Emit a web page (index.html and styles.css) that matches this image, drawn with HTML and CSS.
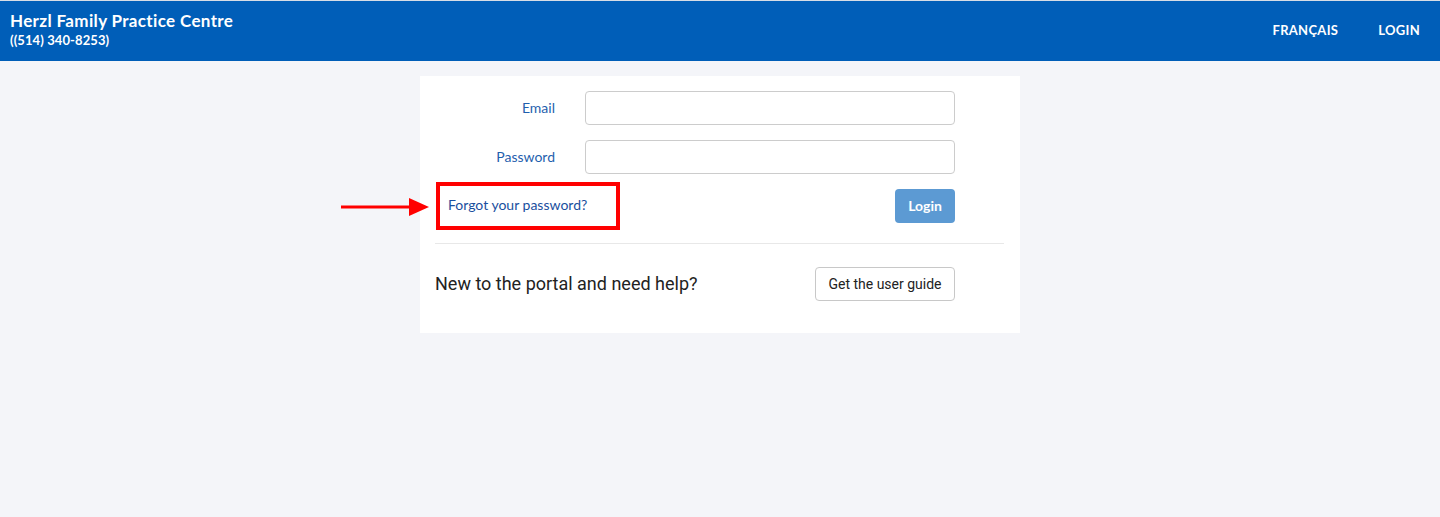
FILE: index.html
```html
<!DOCTYPE html>
<html lang="en">
<head>
	<meta charset="UTF-8">
	<title>Herzl Family Practice Centre</title>
	<link rel="stylesheet" href="styles.css">
</head>
<body>
	<header class="topbar">
		<div class="brand">
			<div class="brand-name">Herzl Family Practice Centre</div>
			<div class="brand-phone">((514) 340-8253)</div>
		</div>
		<nav class="topnav">
			<a href="javascript:;">FRANÇAIS</a>
			<a href="javascript:;">LOGIN</a>
		</nav>
	</header>

	<section class="card">
		<form class="login-form">
			<div class="form-row">
				<label class="form-label" for="email">Email</label>
				<input class="form-input" id="email" type="text">
			</div>
			<div class="form-row">
				<label class="form-label" for="password">Password</label>
				<input class="form-input" id="password" type="password">
			</div>
			<div class="form-actions">
				<div class="forgot">
					<!-- annotation arrow -->
					<svg class="forgot-arrow" width="88" height="20" viewBox="0 0 88 20">
						<rect x="0" y="8.5" width="70" height="3" fill="#f00"/>
						<polygon points="68,1 88,10 68,19" fill="#f00"/>
					</svg>
					<a href="javascript:;">Forgot your password?</a>
				</div>
				<button class="btn-login" type="button">Login</button>
			</div>
		</form>
		<hr class="divider">
		<div class="help-row">
			<p class="help-text">New to the portal and need help?</p>
			<button class="btn-guide" type="button">Get the user guide</button>
		</div>
	</section>
</body>
</html>
```

FILE: styles.css
```css
body {
	margin: 0;
	background: #f4f5f9;
	font-family: Lato, "Open Sans", Arial, sans-serif;
	font-size: 14px;
	border-top: 1px solid #d7dde6;
}
a {
	text-decoration: none;
}
.topbar {
	display: flex;
	justify-content: space-between;
	align-items: flex-start;
	height: 60px;
	background: #005eb8;
	color: #fff;
	padding: 0 10px;
}
.brand {
	padding-top: 10px;
}
.brand-name {
	font-size: 17px;
	font-weight: 700;
	line-height: 19px;
	letter-spacing: 0.35px;
}
.brand-phone {
	font-size: 13px;
	font-weight: 700;
	line-height: 17px;
	margin-top: 2px;
	letter-spacing: 0.1px;
}
.topnav {
	display: flex;
	gap: 40px;
	padding: 21px 10px 0 0;
}
.topnav a {
	color: #fff;
	font-size: 13px;
	font-weight: 700;
	letter-spacing: 0.3px;
}
.card {
	width: 570px;
	margin: 15px auto 0;
	background: #fff;
	padding: 15px 15px 32px;
}
.form-row {
	display: flex;
	align-items: center;
	margin-bottom: 15px;
}
.form-label {
	width: 120px;
	padding: 0 30px 2px 0;
	text-align: right;
	color: #1f5fae;
	font-size: 14px;
}
.form-input {
	box-sizing: border-box;
	width: 370px;
	height: 34px;
	border: 1px solid #ccc;
	border-radius: 4px;
	background: #fff;
	margin: 0;
}
.form-actions {
	display: flex;
	justify-content: space-between;
	align-items: center;
	width: 520px;
	height: 34px;
}
.forgot {
	position: relative;
	display: flex;
	align-items: center;
	box-sizing: border-box;
	width: 184px;
	height: 48px;
	margin-left: 1px;
	padding: 0 0 3px 8px;
	border: 4px solid #f00;
}
.forgot a {
	color: #1a4f9e;
	font-size: 14px;
}
.forgot-arrow {
	position: absolute;
	left: -99px;
	top: 11px;
}
.btn-login {
	width: 60px;
	height: 34px;
	border: 0;
	border-radius: 4px;
	background: #5c9ad3;
	color: #fff;
	font-family: Lato, Arial, sans-serif;
	font-size: 14px;
	font-weight: 700;
	padding-bottom: 2px;
}
.divider {
	border: 0;
	border-top: 1px solid #e8e8e8;
	margin: 20px 1px 23px 0;
}
.help-row {
	display: flex;
	justify-content: space-between;
	align-items: center;
	width: 520px;
}
.help-text {
	margin: 0 0 2px;
	font-family: Roboto, Arial, sans-serif;
	font-size: 18px;
	color: #222;
}
.btn-guide {
	box-sizing: border-box;
	width: 140px;
	height: 34px;
	border: 1px solid #c8c8c8;
	border-radius: 4px;
	background: #fff;
	color: #222;
	font-family: Roboto, Arial, sans-serif;
	font-size: 14px;
}
```
